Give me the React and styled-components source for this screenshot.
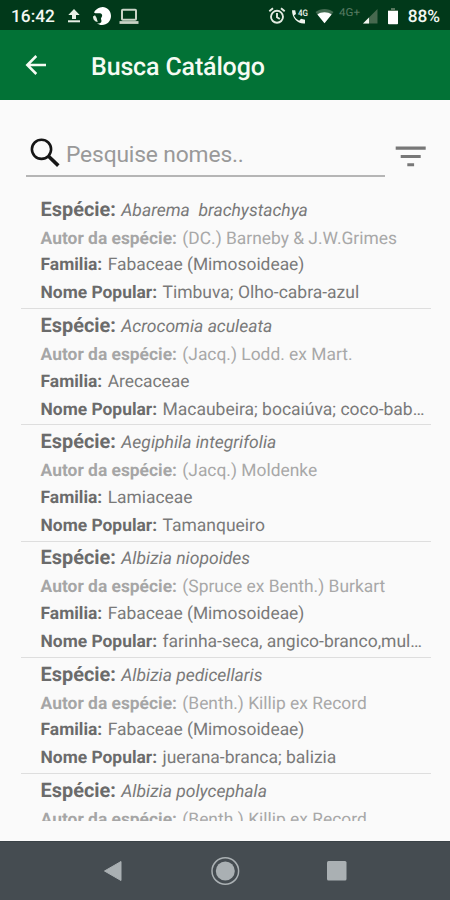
import React from "react";
import styled, { createGlobalStyle } from "styled-components";

const Global = createGlobalStyle`
  * { box-sizing: border-box; }
  html, body { margin: 0; padding: 0; background: #fafafa; }
  body {
    font-family: Roboto, "Liberation Sans", sans-serif;
    text-rendering: geometricPrecision;
    overflow: hidden;
  }
`;

const Screen = styled.div`
  display: flex;
  flex-direction: column;
  width: 450px;
  height: 900px;
  background: #fafafa;
`;

const StatusBar = styled.header`
  display: flex;
  align-items: center;
  justify-content: space-between;
  flex: 0 0 30px;
  height: 30px;
  padding: 2px 10px 0 11px;
  background: #01391a;
  color: #f3f7f2;
`;

const StatusGroup = styled.div`
  display: flex;
  align-items: center;
  svg { display: block; flex: none; }
`;

const StatusText = styled.span`
  font-size: 17.300px;
  line-height: 26px;
  font-weight: 500;
  margin-top: 1px;
  margin-right: ${(p) => p.$gap || "0"};
`;

const IconGap = styled.span`
  flex: none;
  width: ${(p) => p.$w}px;
`;

const AppBar = styled.div`
  display: flex;
  align-items: center;
  flex: 0 0 70px;
  padding-left: 25px;
  background: #027236;
  color: #f5fbf3;
`;

const BackButton = styled.button`
  display: flex;
  width: 22px;
  margin: 0 44px 0 0;
  padding: 0;
  border: 0;
  background: none;
  color: inherit;
`;

const Title = styled.h1`
  margin: 5px 0 0;
  font-size: 25px;
  line-height: 32px;
  font-weight: 500;
  letter-spacing: -0.15px;
`;

const Content = styled.main`
  flex: 0 0 721px;
  height: 721px;
  overflow: hidden;
  display: flex;
  flex-direction: column;
`;

const SearchRow = styled.div`
  display: flex;
  align-items: flex-start;
  flex: 0 0 93px;
  padding: 30px 23px 0 26px;
`;

const SearchField = styled.label`
  display: flex;
  align-items: center;
  width: 359px;
  height: 47px;
  padding: 1px 0 0 4px;
  border-bottom: 2px solid #b5b5b5;
`;

const SearchInput = styled.input`
  flex: 1;
  min-width: 0;
  margin: 4px 0 0 6px;
  padding: 0;
  border: 0;
  outline: 0;
  background: none;
  font: 400 22.800px/30px Roboto, "Liberation Sans", sans-serif;
  letter-spacing: -0.15px;
  color: #666;
  &::placeholder { color: #999; opacity: 1; }
`;

const FilterButton = styled.button`
  display: flex;
  margin: 16px 0 0 10px;
  padding: 0;
  border: 0;
  background: none;
`;

const List = styled.ul`
  flex: 0 0 628px;
  height: 628px;
  overflow: hidden;
  margin: 0;
  padding: 0 19px 0 21px;
  list-style: none;
`;

const Item = styled.li`
  height: 116.200px;
  padding: 2.900px 0 0 19.600px;
  border-bottom: 1px solid #dedede;
`;

const Line = styled.div`
  height: ${(p) => p.$h}px;
  line-height: ${(p) => p.$h}px;
  font-size: ${(p) => p.$size || 17.4}px;
  color: ${(p) => (p.$muted ? "#a8a8a8" : "#797979")};
  white-space: pre;
`;

const Label = styled.b`
  font-size: ${(p) => p.$size || 17.4}px;
  font-weight: 700;
  color: ${(p) => (p.$muted ? "#a6a6a6" : "#6b6b6b")};
  margin-right: 5.400px;
`;

const Name = styled.i`
  font-size: 17.500px;
`;

const Spacer = styled.div`
  flex: 0 0 20px;
`;

const NavBar = styled.nav`
  display: flex;
  align-items: center;
  flex: 1;
  padding-left: 102px;
  border-top: 1px solid #3a4247;
  background: #454c51;
`;

const NavButton = styled.button`
  display: flex;
  margin: 0 ${(p) => p.$gap || 0}px 0 0;
  padding: 0;
  border: 0;
  background: none;
`;

const species = [
  ["Abarema  brachystachya", "(DC.) Barneby & J.W.Grimes", "Fabaceae (Mimosoideae)", "Timbuva; Olho-cabra-azul"],
  ["Acrocomia aculeata", "(Jacq.) Lodd. ex Mart.", "Arecaceae", "Macaubeira; bocaiúva; coco-bab…"],
  ["Aegiphila integrifolia", "(Jacq.) Moldenke", "Lamiaceae", "Tamanqueiro"],
  ["Albizia niopoides", "(Spruce ex Benth.) Burkart", "Fabaceae (Mimosoideae)", "farinha-seca, angico-branco,mul…"],
  ["Albizia pedicellaris", "(Benth.) Killip ex Record", "Fabaceae (Mimosoideae)", "juerana-branca; balizia"],
  ["Albizia polycephala", "(Benth.) Killip ex Record"],
];

function SpeciesItem({ data: [name, author, family, popular] }) {
  return (
    <Item>
      <Line $h={28}><Label $size={19.9}>Espécie:</Label><Name>{name}</Name></Line>
      <Line $h={30.5} $muted><Label $muted>Autor da espécie:</Label>{author}</Line>
      {family && <Line $h={22}><Label>Familia:</Label>{family}</Line>}
      {popular && <Line $h={35} $size={17.5}><Label>Nome Popular:</Label>{popular}</Line>}
    </Item>
  );
}

const UploadIcon = () => (
  <svg width="14" height="16" viewBox="0 0 14 16" fill="#e8efe6">
    <path d="M7 1 1.3 7H5v4h4V7h3.700z" />
    <path d="M1 12.300h12v2H1z" />
  </svg>
);

const GlobeIcon = () => (
  <svg width="20" height="20" viewBox="0 0 20 20">
    <path d="M8 1.500C13-.5 19 3.500 19 10c0 5-4 9-9 9-2 0-3.500-.6-5-1.500 2 .2 4.500-.5 4.500-2.500 0-1.500-1.300-2 .2-4 1-1.700.3-3.500-1.700-3.700C6 7 4 8 2 6.500 3 4 5.500 2.500 8 1.500z" fill="#fff" />
    <path d="M1 10.500l2-1.300 1.500 2.500 1.200 4.300-2-.5C2 14.500 1 12.500 1 10.500z" fill="#e8efe6" />
  </svg>
);

const LaptopIcon = () => (
  <svg width="20" height="17" viewBox="0 0 20 17" fill="none" stroke="#c9d3c6">
    <rect x="3" y="1.800" width="14" height="10" rx="0.800" strokeWidth="2" />
    <path d="M.5 14.500h19" strokeWidth="2.800" />
  </svg>
);

const AlarmIcon = () => (
  <svg width="18" height="18" viewBox="0 0 18 18" fill="none" stroke="#e2eae0" strokeWidth="1.900">
    <circle cx="9" cy="9.800" r="6" />
    <path d="M1.300 4.300 5 1.300M16.700 4.300 13 1.300M9 6v4.200l2.800 1.800" />
  </svg>
);

const CallIcon = () => (
  <svg width="18" height="18" viewBox="0 0 18 18" fill="#f0f5ee">
    <path d="M1 3.200h3.200l.8 3.700-2 1.600c1.200 2.400 3 4.200 5.200 5.300l1.800-2 4 1v3.700C7 17.500 1 11 1 3.200z" />
    <text x="7" y="8.500" fontFamily="Roboto, sans-serif" fontSize="9" fontWeight="500" textLength="10" lengthAdjust="spacingAndGlyphs">4G</text>
  </svg>
);

const WifiIcon = () => (
  <svg width="19" height="16" viewBox="0 0 20 16">
    <path d="M.5 3.800C6-.5 14-.5 19.500 3.800L10 15.500z" fill="#436b51" />
    <path d="M2.500 6.500c4-3.200 11-3.200 15 0L10 15.500z" fill="#fff" />
  </svg>
);

const SignalIcon = () => (
  <svg width="40" height="20" viewBox="0 -2 40 20" overflow="visible">
    <text x="0" y="7.500" fill="#557a61" fontFamily="Roboto, sans-serif" fontSize="11" textLength="21" lengthAdjust="spacingAndGlyphs">4G+</text>
    <path d="M38.500 1v14.500H24z" fill="#47694f" />
    <path d="M30 9.500v6h-6z" fill="#f2f5f0" />
  </svg>
);

const BatteryIcon = () => (
  <svg width="10" height="17" viewBox="0 0 10 17">
    <path d="M3 0h4v2h3v3H0V2h3z" fill="#57775e" />
    <path d="M0 3h10v12.500q0 .8-.8.800H.8Q0 16.300 0 15.500z" fill="#fff" />
  </svg>
);

const BackIcon = () => (
  <svg width="22" height="22" viewBox="0 0 22 22" fill="none" stroke="#f5fbf3" strokeWidth="2.500">
    <path d="M21 11H3M11.300 2 2.300 11l9 9" />
  </svg>
);

const SearchIcon = () => (
  <svg width="30" height="30" viewBox="0 0 30 30" fill="none" stroke="#151515">
    <circle cx="11.500" cy="11.300" r="9.600" strokeWidth="2.600" />
    <path d="m18.500 18.300 9.800 9.300" strokeWidth="3.600" />
  </svg>
);

const FilterIcon = () => (
  <svg width="31" height="22" viewBox="0 0 31 22" fill="#777">
    <path d="M.7.500h30v3.200H.7zM5.700 9h20v3h-20zM12.300 17.300h6.800v3h-6.800z" />
  </svg>
);

export default function App() {
  return (
    <Screen>
      <Global />
      <StatusBar>
        <StatusGroup>
          <StatusText $gap="12px">16:42</StatusText>
          <UploadIcon /><IconGap $w={11} />
          <GlobeIcon /><IconGap $w={7} />
          <LaptopIcon />
        </StatusGroup>
        <StatusGroup>
          <AlarmIcon /><IconGap $w={5} />
          <CallIcon /><IconGap $w={6} />
          <WifiIcon /><IconGap $w={5} />
          <SignalIcon /><IconGap $w={9} />
          <BatteryIcon /><IconGap $w={10} />
          <StatusText>88%</StatusText>
        </StatusGroup>
      </StatusBar>
      <AppBar>
        <BackButton aria-label="Voltar"><BackIcon /></BackButton>
        <Title>Busca Catálogo</Title>
      </AppBar>
      <Content>
        <SearchRow>
          <SearchField>
            <SearchIcon />
            <SearchInput placeholder="Pesquise nomes.." />
          </SearchField>
          <FilterButton aria-label="Filtrar"><FilterIcon /></FilterButton>
        </SearchRow>
        <List>
          {species.map((s) => <SpeciesItem key={s[0]} data={s} />)}
        </List>
      </Content>
      <Spacer />
      <NavBar>
        <NavButton $gap={87} aria-label="Voltar">
          <svg width="21" height="22" viewBox="0 0 21 22"><path d="M19 1.500v19L2.500 11z" fill="#aab0b3" stroke="#aab0b3" strokeLinejoin="round" /></svg>
        </NavButton>
        <NavButton $gap={86.5} aria-label="Início">
          <svg width="30" height="30" viewBox="0 0 30 30"><circle cx="15.300" cy="15" r="13.300" fill="none" stroke="#aab0b3" strokeWidth="1.500" /><circle cx="15.300" cy="15" r="9.500" fill="#aab0b3" /></svg>
        </NavButton>
        <NavButton aria-label="Recentes">
          <svg width="20" height="20" viewBox="0 0 20 20"><rect width="19.500" height="19.500" rx="1.500" fill="#aab0b3" /></svg>
        </NavButton>
      </NavBar>
    </Screen>
  );
}
